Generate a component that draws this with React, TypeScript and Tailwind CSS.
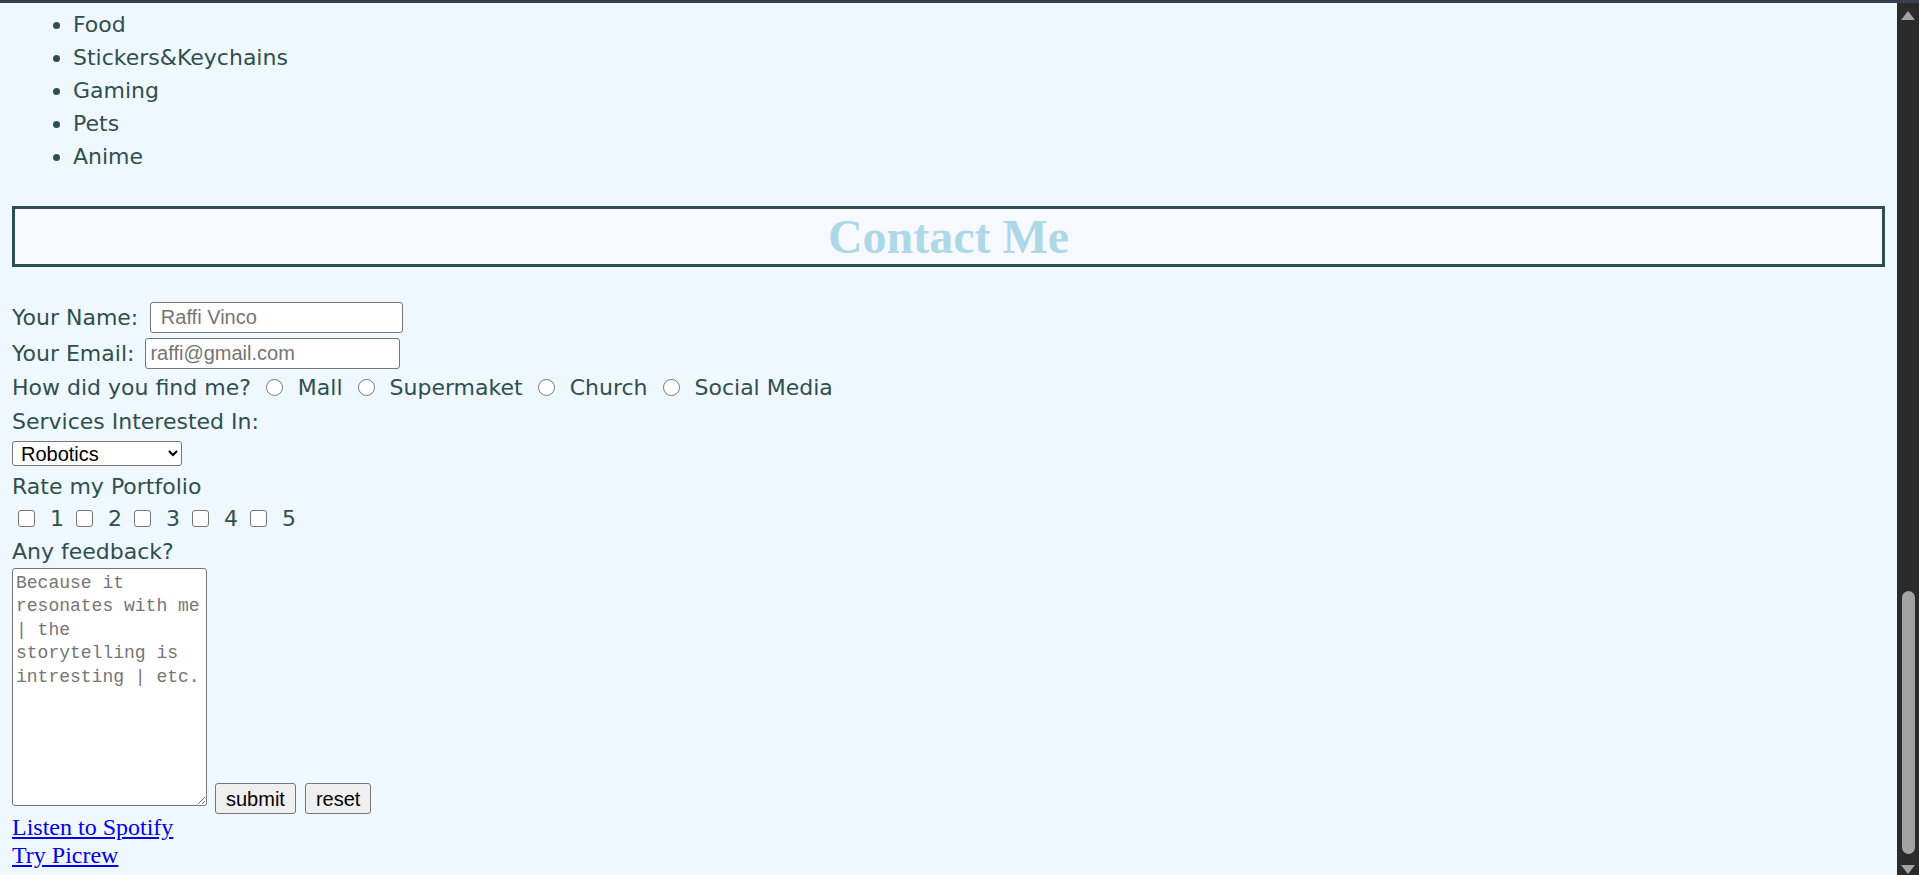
import React from "react";

const interests = ["Food", "Stickers&Keychains", "Gaming", "Pets", "Anime"];
const sources = ["Mall", "Supermaket", "Church", "Social Media"];

export default function App() {
  return (
    <div className="flex h-[875px] w-full flex-col overflow-hidden bg-[#f0f8ff] font-['DejaVu_Sans',sans-serif] text-[22px] text-[#2f4f4f]">
      <div className="h-[3px] w-full shrink-0 bg-[#37404c]" />
      <div className="flex flex-1">
        <main className="flex-1 px-[12px]">
          <ul className="mt-[5px] list-disc pl-[61px] leading-[33px]">
            {interests.map((item) => (
              <li key={item}>{item}</li>
            ))}
          </ul>

          <div className="mt-[33px] border-[3px] border-[#2f4f4f] bg-[#f8f8ff]">
            <h1 className="text-center font-['Liberation_Serif',serif] text-[48px] font-bold leading-[55px] text-[#add8e6]">
              Contact Me
            </h1>
          </div>

          <form className="mt-[33px]">
            <div className="flex h-[35px] items-center">
              <label>Your Name:</label>
              <input
                type="text"
                placeholder={"\u00a0Raffi Vinco"}
                className="ml-[12px] h-[31px] w-[253px] rounded-[3px] border border-[#767676] bg-white px-[4px] font-['Liberation_Sans',Arial,sans-serif] text-[20px] text-black placeholder:text-[#757575]"
              />
            </div>
            <div className="flex h-[36px] items-center">
              <label>Your Email:</label>
              <input
                type="email"
                placeholder="raffi@gmail.com"
                className="ml-[11px] h-[31px] w-[255px] rounded-[3px] border border-[#767676] bg-white px-[4px] font-['Liberation_Sans',Arial,sans-serif] text-[20px] text-black placeholder:text-[#757575]"
              />
            </div>
            <div className="flex h-[33px] items-center">
              <span>How did you find me?</span>
              {sources.map((s) => (
                <React.Fragment key={s}>
                  <input
                    type="radio"
                    name="source"
                    className="mx-[15px] h-[17px] w-[17px] appearance-none rounded-full border border-[#767676] bg-white"
                  />
                  <span>{s}</span>
                </React.Fragment>
              ))}
            </div>
            <div className="flex h-[34px] items-center">Services Interested In:</div>
            <div className="flex h-[31px] items-center">
              <select className="h-[25px] w-[170px] rounded-[3px] border border-[#767676] bg-white pl-[4px] font-['Liberation_Sans',Arial,sans-serif] text-[20px] text-black">
                <option>Robotics</option>
                <option>Web Design</option>
                <option>Illustration</option>
              </select>
            </div>
            <div className="flex h-[34px] items-center">Rate my Portfolio</div>
            <div className="flex h-[31px] items-center pl-[6px]">
              {[1, 2, 3, 4, 5].map((n) => (
                <React.Fragment key={n}>
                  <input
                    type="checkbox"
                    className="mr-[15px] h-[17px] w-[17px] appearance-none rounded-[3px] border border-[#767676] bg-white"
                  />
                  <span className="mr-[12px]">{n}</span>
                </React.Fragment>
              ))}
            </div>
            <div className="flex h-[34px] items-center">Any feedback?</div>
            <div className="flex items-end">
              <textarea
                placeholder="Because it resonates with me | the storytelling is intresting | etc."
                className="mb-[8px] h-[238px] w-[195px] rounded-[3px] border border-[#767676] bg-white p-[3px] font-['Liberation_Mono',monospace] text-[18px] leading-[23.4px] text-black placeholder:text-[#757575]"
              />
              <button
                type="submit"
                className="ml-[8px] h-[31px] rounded-[3px] border border-[#767676] bg-[#efefef] px-[10px] font-['Liberation_Sans',Arial,sans-serif] text-[20px] text-black"
              >
                submit
              </button>
              <button
                type="reset"
                className="ml-[9px] h-[31px] rounded-[3px] border border-[#767676] bg-[#efefef] px-[10px] font-['Liberation_Sans',Arial,sans-serif] text-[20px] text-black"
              >
                reset
              </button>
            </div>
          </form>

          <div className="font-['Liberation_Serif',serif] text-[24px] leading-[27.5px]">
            <a href="#" className="block w-fit text-[#0000ee] underline">
              Listen to Spotify
            </a>
            <a href="#" className="block w-fit text-[#0000ee] underline">
              Try Picrew
            </a>
          </div>
        </main>

        <div className="flex w-[22px] shrink-0 flex-col items-center bg-[#2b2b2b]">
          <svg width="14" height="9" viewBox="0 0 14 9" className="mt-[8px]">
            <path d="M7 0 L14 9 L0 9 Z" fill="#a3a3a3" />
          </svg>
          <div className="flex-1" />
          <div className="h-[263px] w-[13px] rounded-full bg-[#a3a3a3]" />
          <svg width="14" height="9" viewBox="0 0 14 9" className="mb-[1px] mt-[11px]">
            <path d="M0 0 L14 0 L7 9 Z" fill="#a3a3a3" />
          </svg>
        </div>
      </div>
    </div>
  );
}
